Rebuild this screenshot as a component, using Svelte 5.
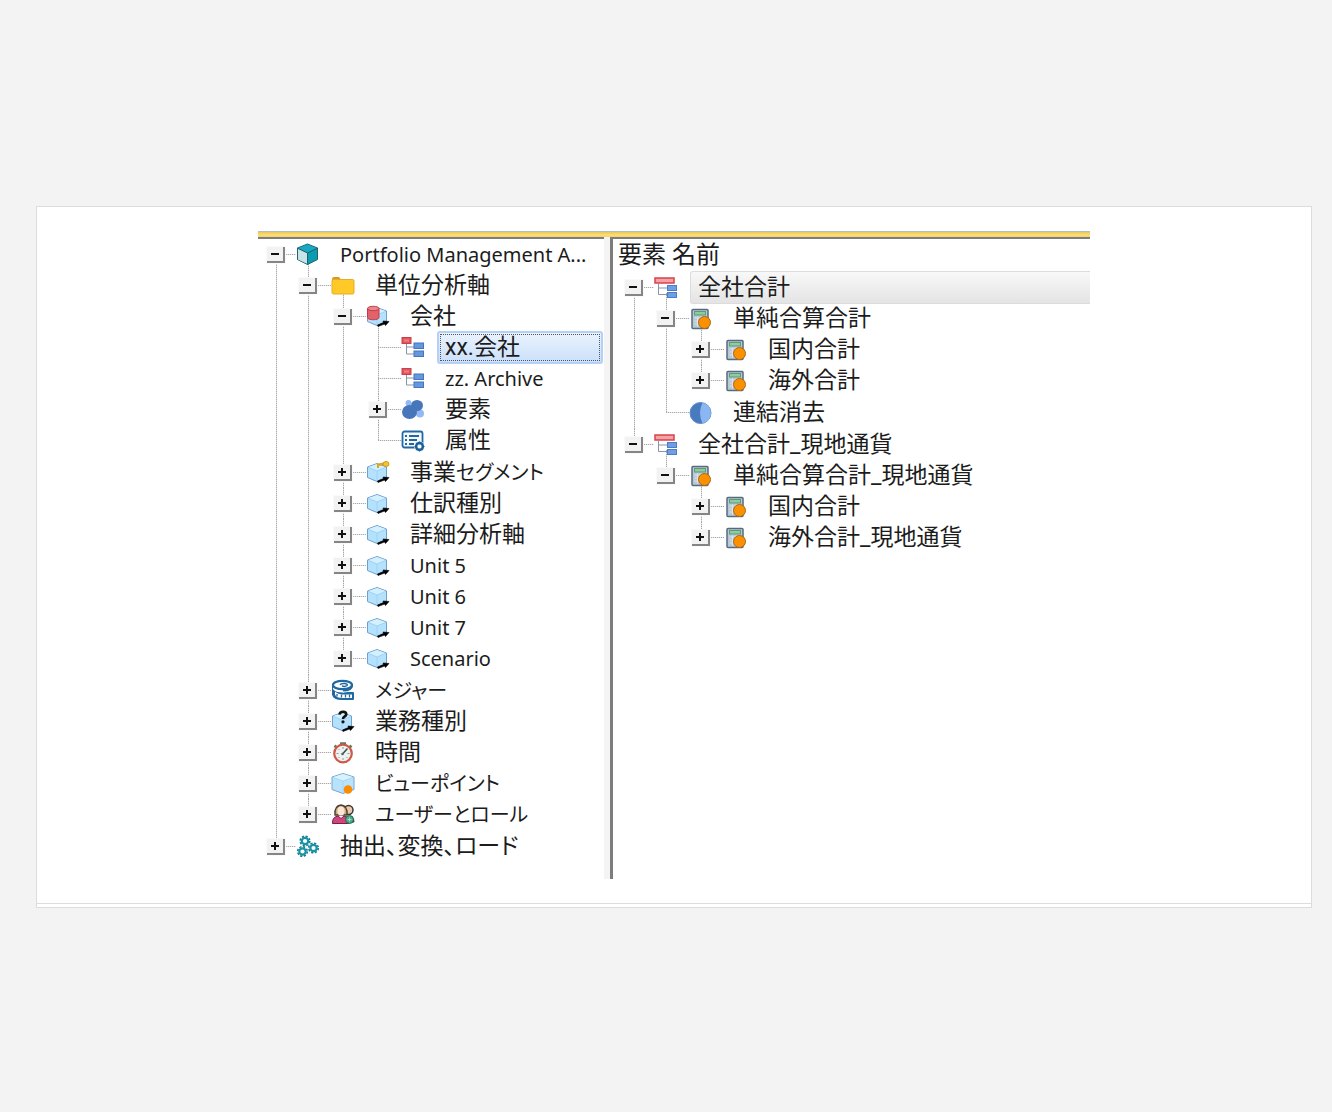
<script lang="ts">
  type TreeNode = {
    label: string
    kana?: string
    icon: string
    latin?: boolean
    open?: boolean
    selected?: 'active' | 'inactive'
    children?: TreeNode[]
    expandable?: boolean
  }

  const dimensions: TreeNode[] = $state([
    {
      label: 'Portfolio Management A...',
      icon: 'model',
      latin: true,
      open: true,
      children: [
        {
          label: '単位分析軸',
          icon: 'folder',
          open: true,
          children: [
            {
              label: '会社',
              icon: 'company',
              open: true,
              children: [
                { label: 'xx.会社', icon: 'hierarchy', selected: 'active' },
                { label: 'zz. Archive', icon: 'hierarchy', latin: true },
                { label: '要素', icon: 'elements', expandable: true },
                { label: '属性', icon: 'attributes' }
              ]
            },
            { label: '事業', kana: 'セグメント', icon: 'keycube', expandable: true },
            { label: '仕訳種別', icon: 'unit', expandable: true },
            { label: '詳細分析軸', icon: 'unit', expandable: true },
            { label: 'Unit 5', icon: 'unit', latin: true, expandable: true },
            { label: 'Unit 6', icon: 'unit', latin: true, expandable: true },
            { label: 'Unit 7', icon: 'unit', latin: true, expandable: true },
            { label: 'Scenario', icon: 'unit', latin: true, expandable: true }
          ]
        },
        { label: '', kana: 'メジャー', icon: 'measure', expandable: true },
        { label: '業務種別', icon: 'question', expandable: true },
        { label: '時間', icon: 'time', expandable: true },
        { label: '', kana: 'ビューポイント', icon: 'viewpoint', expandable: true },
        { label: '', kana: 'ユーザーとロール', icon: 'users', expandable: true }
      ]
    },
    { label: '抽出、変換、ロード', icon: 'gears', expandable: true }
  ])

  const elements: TreeNode[] = $state([
    {
      label: '全社合計',
      icon: 'root',
      open: true,
      selected: 'inactive',
      children: [
        {
          label: '単純合算合計',
          icon: 'calc',
          open: true,
          children: [
            { label: '国内合計', icon: 'calc', expandable: true },
            { label: '海外合計', icon: 'calc', expandable: true }
          ]
        },
        { label: '連結消去', icon: 'eliminate' }
      ]
    },
    {
      label: '全社合計_現地通貨',
      icon: 'root',
      open: true,
      children: [
        {
          label: '単純合算合計_現地通貨',
          icon: 'calc',
          open: true,
          children: [
            { label: '国内合計', icon: 'calc', expandable: true },
            { label: '海外合計_現地通貨', icon: 'calc', expandable: true }
          ]
        }
      ]
    }
  ])

  function toggle(node: TreeNode) {
    if (node.children) node.open = !node.open
  }
</script>

{#snippet cube()}
  <path d="M11 2.500 20.500 6v10.500L11 20.500 1.500 16.500V6z" fill="#b4e2fd" stroke="#6f9fd0" />
  <path d="M11 3 20 6.300 11 10 2 6.300z" fill="#d3f0ff" />
  <path d="M11 10v10M11 10l9-3.700M11 10 2 6.300" stroke="#9ed2f5" fill="none" />
{/snippet}

{#snippet arrow()}
  <path d="M11.500 20l6-2.500-.5-1.500 6 .5-3.500 4-1-1.500-6.500 2.500z" fill="#000" stroke="#000" stroke-width=".6" />
{/snippet}

{#snippet gear(x: number, y: number)}
  <circle cx={x} cy={y} r="4.800" fill="none" stroke="#137d91" stroke-width="1.600" stroke-dasharray="2.200 1.570" />
  <circle cx={x} cy={y} r="3.200" fill="#fff" stroke="#1592a6" stroke-width="2.200" />
{/snippet}

{#snippet picture(icon: string)}
  <svg viewBox="0 0 24 24" width="24" height="24" aria-hidden="true">
    {#if icon === 'model'}
      <path d="M11.500 1 21.500 5v11.500l-10 5-10-5V5z" fill="#0d9bb2" stroke="#1c6371" stroke-linejoin="round" />
      <path d="M2 5.500 11.500 10v11L2 16.500z" fill="#c9e3e7" />
      <path d="M11.500 1.500 21 5.200l-9.500 4.300L2 5.200z" fill="#18a9c0" />
      <path d="M1.500 5.200 11.500 10l10-4.800M11.500 10v11.500" fill="none" stroke="#1c6371" />
    {:else if icon === 'folder'}
      <path d="M1 5q0-2 2-2h5l2 2.500h12v6H1z" fill="#d89a25" />
      <rect x="1" y="5.500" width="22" height="14.500" rx="1.500" fill="#ffca28" stroke="#e5ad25" />
    {:else if icon === 'company'}
      {@render cube()}
      <path d="M1.500 3.500v9c0 3 11.500 3 11.500 0v-9z" fill="#e0636c" stroke="#c43a47" />
      <ellipse cx="7.300" cy="3.500" rx="5.800" ry="2.200" fill="#ec868b" stroke="#c43a47" />
      {@render arrow()}
    {:else if icon === 'hierarchy'}
      <path d="M5.500 8v10h8M5.500 11h8" fill="none" stroke="#8795a8" />
      <rect x="1" y="1.500" width="9" height="6" fill="#e2555b" stroke="#c9414b" />
      <rect x="3" y="3.500" width="5" height="2" fill="#ee8084" />
      <rect x="13" y="7" width="9.500" height="5.500" fill="#6397e0" stroke="#4774bd" />
      <rect x="13" y="15" width="9.500" height="5.500" fill="#6397e0" stroke="#4774bd" />
    {:else if icon === 'root'}
      <path d="M4.500 8v10.500h9M4.500 12h9" fill="none" stroke="#8795a8" />
      <rect x="1" y="2" width="19" height="5" fill="#f2a1a4" stroke="#d7434e" stroke-width="1.500" />
      <rect x="13.500" y="9.500" width="9" height="5" fill="#6b9fe6" stroke="#4d7cc4" />
      <rect x="13.500" y="16.500" width="9" height="5" fill="#6b9fe6" stroke="#4d7cc4" />
    {:else if icon === 'elements'}
      <circle cx="7.500" cy="5" r="3" fill="#91baf5" />
      <circle cx="19" cy="15.500" r="4" fill="#91baf5" />
      <ellipse cx="16" cy="7.500" rx="6" ry="5.500" fill="#4776ba" />
      <ellipse cx="8.500" cy="14" rx="7.500" ry="7" fill="#4776ba" />
    {:else if icon === 'attributes'}
      <rect x="1.500" y="2.500" width="20" height="16" rx="2" fill="#f4f9fd" stroke="#2268a3" stroke-width="1.800" />
      <path d="M4 7h2M4 11h2M4 15h2" stroke="#2268a3" stroke-width="1.800" />
      <path d="M8 7h10M8 11h8M8 15h5" stroke="#2268a3" stroke-width="1.800" />
      <circle cx="18.500" cy="17.500" r="5.200" fill="#fff" />
      <circle cx="18.500" cy="17.500" r="3.400" fill="none" stroke="#1b619e" stroke-width="2.500" />
      <path d="M18.500 12.500v10M13.500 17.500h10M15 14l7 7M22 14l-7 7" stroke="#1b619e" stroke-width="1.200" />
      <circle cx="18.500" cy="17.500" r="2" fill="#fff" />
    {:else if icon === 'keycube'}
      {@render cube()}
      <path d="M11 4 19 2.500" stroke="#d9a720" stroke-width="2.600" />
      <path d="M12 4.500V7" stroke="#d9a720" stroke-width="2" />
      <ellipse cx="20" cy="3" rx="3" ry="2.500" fill="#f2c52c" stroke="#c99a22" />
      {@render arrow()}
    {:else if icon === 'unit'}
      {@render cube()}
      {@render arrow()}
    {:else if icon === 'question'}
      {@render cube()}
      <path d="M8.500 4.700C9 .5 16 1 15.200 4.700 14.600 7 12 6.500 12 9" fill="none" stroke="#111" stroke-width="2.600" />
      <circle cx="12" cy="11.800" r="1.600" fill="#111" />
      {@render arrow()}
    {:else if icon === 'measure'}
      <path d="M2 6v9.500q1 4.500 9 4.500h11v-6h-9" fill="#2168a0" stroke="#2168a0" stroke-width="2" stroke-linejoin="round" />
      <path d="M4 12.500q3 3 8 3h9v3.500H12q-7 0-8-3.500z" fill="#fff" />
      <path d="M2 7v3q2 3.500 10 3.500 7 0 9.500-3V6z" fill="#fff" />
      <ellipse cx="11.500" cy="6" rx="9.500" ry="4.200" fill="#fff" stroke="#2168a0" stroke-width="2.200" />
      <path d="M9 6q1-2 5-1.500 3 .5 2 2-2 1.500-5 .5" fill="none" stroke="#2168a0" stroke-width="1.500" />
      <path d="M21 6.500q0 5-9 5" fill="none" stroke="#2168a0" stroke-width="2" />
      <path d="M6 15v2.500M10.500 15.500v3M14.500 15.500v3M18.500 15.500v3" stroke="#2168a0" stroke-width="1.300" />
    {:else if icon === 'time'}
      <path d="M9 2.500h6M12 2v4M3.500 6.500l2-2M20.500 6.500l-2-2" stroke="#5b7d66" stroke-width="2.500" />
      <circle cx="12" cy="12.500" r="8.800" fill="#edf1f1" stroke="#cf5846" stroke-width="2.200" />
      <path d="M12 6v2M12 17v2M5.500 12.500h2M16.500 12.500h2M7.500 8l1 1M7.500 17l1-1M16.500 17l-1-1" stroke="#8d9a9b" />
      <path d="M11.500 13 16.500 7.500" stroke="#3c4a4c" stroke-width="1.500" />
      <circle cx="11.500" cy="13" r="1.300" fill="#596668" />
    {:else if icon === 'viewpoint'}
      <path d="M12 1.500 23 5v12.500l-11 4-11-4V5z" fill="#b9e2fc" stroke="#76a5d2" />
      <path d="M12 2 22.500 5.200 12 9 1.500 5.200z" fill="#d9f2ff" />
      <path d="M1.500 5.200 12 9.200l10.500-4M12 9v12" fill="none" stroke="#a5d5f5" />
      <circle cx="17" cy="17.500" r="4.300" fill="#fb8b00" />
    {:else if icon === 'users'}
      <circle cx="17.500" cy="7" r="4.500" fill="#e9c9ac" stroke="#3b3433" stroke-width="1.500" />
      <path d="M16 14q7-2 7 5h-8z" fill="#5a6c68" stroke="#333" />
      <path d="M4 12q-1-9 6-10 7 1 6 10z" fill="#c9aa79" stroke="#4a3b2e" stroke-width="1.300" />
      <ellipse cx="10" cy="8" rx="3.600" ry="4.500" fill="#fbe5d5" />
      <path d="M1.500 20.500q-.5-6.500 5.500-7.500l3 2.500 3-2.500q5 1 5 7.500z" fill="#d2447e" stroke="#742146" />
      <circle cx="18.500" cy="16.500" r="4" fill="#4bab87" stroke="#276852" />
      <path d="M16.500 16.500h4M18.500 14.500v4" stroke="#a4dec8" />
    {:else if icon === 'gears'}
      {@render gear(9, 6)}
      {@render gear(17.5, 13)}
      {@render gear(6.5, 16.5)}
    {:else if icon === 'calc'}
      <rect x="3" y="2.500" width="16" height="19" rx="1" fill="#b9c8d5" stroke="#566b80" stroke-width="1.500" />
      <rect x="5.500" y="4.500" width="11" height="3.500" fill="#8fcb9f" stroke="#5d9a78" />
      <path d="M5.500 11h11M5.500 14h8M5.500 17h6M8.500 9.500v10M12 9.500v10" stroke="#dae4ec" />
      <circle cx="15.500" cy="15.500" r="6" fill="#fb9000" stroke="#a9691b" />
    {:else if icon === 'eliminate'}
      <circle cx="11.500" cy="12" r="10.500" fill="#497abd" stroke="#5b8bcd" />
      <path d="M13.500 1.700a10.500 10.500 0 0 1 0 20.600Q8.500 12 13.500 1.700z" fill="#8ab6f3" />
    {/if}
  </svg>
{/snippet}

{#snippet branch(nodes: TreeNode[])}
  {#each nodes as node}
    <li>
      <div class="row">
        <div class="joint">
          {#if node.children || node.expandable}
            <button type="button" class="toggle" aria-label={node.label + (node.kana ?? '')} aria-expanded={!!node.open} onclick={() => toggle(node)}>
              <svg viewBox="0 0 16 14" width="16" height="14" aria-hidden="true">
                <path d="M4 7h8" />
                {#if !node.open}
                  <path d="M8 3v8" />
                {/if}
              </svg>
            </button>
          {/if}
        </div>
        <div class="icon" class:parent={node.open}>{@render picture(node.icon)}</div>
        <span class={['label', node.selected, { latin: node.latin }]}>
          {node.label}{#if node.kana}<span class="kana">{node.kana}</span>{/if}
        </span>
      </div>
      {#if node.open && node.children}
        <ul>{@render branch(node.children)}</ul>
      {/if}
    </li>
  {/each}
{/snippet}

<main>
  <div class="sheet">
    <div class="window">
      <nav class="pane" aria-label="Portfolio Management">
        <ul class="tree">{@render branch(dimensions)}</ul>
      </nav>
      <div class="splitter"></div>
      <section class="pane detail" aria-labelledby="element-name">
        <h1 id="element-name">要素 名前</h1>
        <ul class="tree">{@render branch(elements)}</ul>
      </section>
    </div>
  </div>
</main>

<style>
  :global(body) {
    background: #f3f3f3;
  }

  main {
    margin: 206px 20px 24px 36px;
    padding-bottom: 3px;
    border: 1px solid #dcdcdc;
    background: #fff;
    color: #1c1c1c;
    font-family: Roboto, "Noto Sans CJK JP", sans-serif;
    font-size: 23px;
    font-feature-settings: "palt";
  }

  .sheet {
    padding: 24px 20px;
    border-bottom: 1px solid #dcdcdc;
  }

  .window {
    display: grid;
    grid-template-columns: 346px 6px minmax(0, 1fr);
    max-width: 832px;
    margin: 0 auto;
    border-top: 1px solid #b9bcc0;
    background: linear-gradient(#e8c65c, #ffdf70 3px, #f3d071 5px, transparent 5px);
  }

  .pane {
    min-width: 0;
    margin-top: 5px;
    padding: 0 1px 16px 6px;
    border-top: 2px solid #7d7d7d;
    background: #fff;
    overflow: hidden;
  }

  .splitter {
    margin-top: 5px;
    background: #f4f4f4;
  }

  .detail {
    padding: 0 0 16px 9px;
    border-left: 3px solid #7d7d7d;
  }

  h1 {
    margin: 0 0 0 -4px;
    font-size: 24px;
    font-weight: 400;
    line-height: 33px;
  }

  ul {
    margin: 0 0 0 var(--step);
    padding: 0 0 1px;
    list-style: none;
  }

  .tree {
    margin: 0;
  }

  li {
    --step: 35px;
    background: repeating-linear-gradient(#a8a8a8 0 1px, #e0e0e0 1px 2px) 12px 0 / 1px 100% no-repeat;
  }

  .tree > li {
    --step: 32px;
  }

  .tree > li:first-child {
    background-position: 12px 16px;
  }

  li:last-child {
    background-size: 1px 16px;
  }

  .row {
    display: flex;
    align-items: center;
    height: 31px;
  }

  .joint {
    flex: none;
    display: flex;
    align-items: center;
    width: var(--step);
    height: 31px;
    background: repeating-linear-gradient(90deg, #a8a8a8 0 1px, #e8e8e8 1px 2px) 12px 15px / 100% 1px no-repeat;
  }

  .toggle {
    display: flex;
    width: 18px;
    height: 16px;
    margin-left: 3px;
    padding: 0;
    border: 0 solid #858585;
    border-width: 0 2px 2px 0;
    background: #f2f2f2;
    outline: 1px solid #fafafa;
  }

  .toggle svg {
    stroke: #111;
    stroke-width: 2;
  }

  .icon {
    flex: none;
    display: flex;
    align-items: center;
    width: 24px;
    height: 31px;
  }

  .parent {
    background: repeating-linear-gradient(#a8a8a8 0 1px, #e0e0e0 1px 2px) 12px 100% / 1px 10px no-repeat;
  }

  .label {
    flex: 1;
    height: 31px;
    margin-left: 12px;
    padding-left: 8px;
    line-height: 31px;
    white-space: nowrap;
  }

  .latin {
    font-family: "Noto Sans", sans-serif;
    font-size: 20px;
  }

  .kana {
    font-size: 20px;
  }

  .active {
    box-sizing: border-box;
    height: 33px;
    padding-left: 6px;
    border: 2px solid #b3d0f6;
    border-radius: 3px;
    outline: 1px dotted #555;
    outline-offset: -4px;
    background: linear-gradient(#eaf3fe, #cbe0fb);
    line-height: 29px;
  }

  .inactive {
    box-sizing: border-box;
    height: 33px;
    padding-left: 7px;
    border: 1px solid #dcdcdc;
    border-right: 0;
    border-radius: 3px 0 0 3px;
    background: linear-gradient(#f8f8f8, #e4e4e4);
    line-height: 31px;
  }
</style>
